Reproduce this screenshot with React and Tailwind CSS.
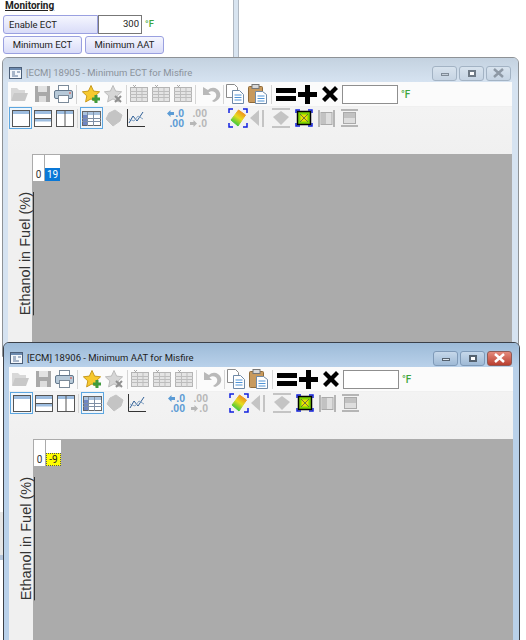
import React from "react";

const ui = { fontFamily: 'Roboto,"Noto Sans",sans-serif' };
const Ic = ({ w = 20, h = 20, ml = 0, children }) => (
  <svg width={w} height={h} viewBox={`0 0 ${w} ${h}`} className="shrink-0 block" style={{ marginLeft: ml }}>{children}</svg>
);
const Sep = ({ ml = 3, mr = 3 }) => <div className="w-px h-[19px] bg-[#d5d5d5] shrink-0" style={{ marginLeft: ml, marginRight: mr }} />;

const Star = ({ fill, stroke }) => <path d="M10 1.5l2.6 5.6 6 .7-4.4 4.1 1.2 6-5.4-3-5.4 3 1.2-6L1.4 7.8l6-.7z" fill={fill} stroke={stroke} strokeWidth="1" />;
const GridIc = ({ ml }) => (
  <Ic w={18} h={18} ml={ml}>
    <rect x="0.5" y="2.5" width="17" height="14" fill="#e4e4e4" stroke="#b5b5b5" />
    <path d="M0 6.5h18M0 9.5h18M0 12.5h18M6.5 3v14M12 3v14" stroke="#bdbdbd" />
    <path d="M3 0l3 3M6 0l-3 3" stroke="#aaa" />
  </Ic>
);
const Sel = ({ w, ml = 0, children }) => (
  <div className="h-[22px] border border-[#5ca6e0] bg-[#f0f6fb] flex items-center justify-center shrink-0" style={{ width: w, marginLeft: ml }}>{children}</div>
);
const Layout = ({ kind }) => (
  <Ic w={18} h={17}>
    <rect x="0.5" y="0.5" width="17" height="16" fill="#fff" stroke="#555" />
    <rect x="1" y="1" width="16" height="3" fill="#9dbde0" />
    {kind === 1 && <path d="M0 8.5h18" stroke="#555" />}
    {kind === 1 && <rect x="1" y="9" width="16" height="2.5" fill="#9dbde0" />}
    {kind === 2 && <path d="M9 1v16" stroke="#555" />}
  </Ic>
);
const Diamond = ({ ml, color = "#c4c4c4" }) => (
  <Ic w={18} h={18} ml={ml}><path d="M10 1l7 5-2 6-7 5-7-7 3-6z" fill={color} stroke={color} strokeLinejoin="round" /></Ic>
);
const Arrow = ({ dir, c }) => (
  <svg width="7" height="7" viewBox="0 0 7 7" className="shrink-0">
    <path d={dir === "l" ? "M0 3.500L3.500 0v2H7v3H3.500v2z" : "M7 3.500L3.500 0v2H0v3h3.500v2z"} fill={c} />
  </svg>
);
const DecTxt = ({ rows, ml, c }) => (
  <div className="w-[19px] shrink-0 text-[10.5px] leading-[10px] font-bold" style={{ marginLeft: ml, color: c, fontFamily: '"Liberation Sans",sans-serif' }}>
    {rows.map((r, i) => (
      <div key={i} className="flex items-center justify-end gap-px h-[10px]">
        {r.arrow && <Arrow dir={r.arrow} c={c} />}
        <span>{r.t}</span>
      </div>
    ))}
  </div>
);

function Toolbars({ gid }) {
  return (
    <div>
      <div className="h-[24px] flex items-center pl-[2px] bg-[#fbfbfb]">
        <Ic w={18} h={18}><path d="M1 3h6l2 2h6v3H5l-3 7H1z" fill="#d8d8d8" /><path d="M4 8h14l-3 8H1z" fill="#c8c8c8" /></Ic>
        <Ic w={17} h={18} ml={6}><path d="M1 1h15v16H1z" fill="#a9a9a9" /><rect x="4" y="1" width="9" height="6" fill="#e2e2e2" /><rect x="5" y="11" width="7" height="6" fill="#ddd" /></Ic>
        <Ic w={19} h={18} ml={3}>
          <rect x="4.5" y="0.5" width="10" height="6" fill="#fff" stroke="#7b8a99" />
          <rect x="0.5" y="5.5" width="18" height="8" rx="1.5" fill="#b7c9d8" stroke="#64788c" />
          <rect x="4.5" y="10.5" width="10" height="7" fill="#fff" stroke="#7b8a99" />
          <path d="M15 8h2" stroke="#e04a3a" />
        </Ic>
        <Sep mr={4} />
        <Ic w={20} h={20}><Star fill="#f7c92e" stroke="#c99a1c" /><path d="M15 11v8M11 15h8" stroke="#3f9a3c" strokeWidth="3" /></Ic>
        <Ic w={20} h={20} ml={2}><Star fill="#d6d6d6" stroke="#bcbcbc" /><path d="M12 12l6 6M18 12l-6 6" stroke="#8f8f8f" strokeWidth="2" /></Ic>
        <Sep ml={3} mr={3} />
        <GridIc />
        <GridIc ml={4} />
        <GridIc ml={4} />
        <Sep ml={3} mr={3} />
        <Ic w={20} h={18} ml={2}><path d="M2 2v8h8L7.500 7.500C10 5.500 14 6 15 9c1 3-1 5-4 7l2 1c5-2 7-5 6-9-1.500-5-8-7-12-3z" fill="#b9b9b9" /></Ic>
        <Sep ml={2} mr={1} />
        <Ic w={20} h={20}>
          <path d="M1.500 0.500h8l3 3v10h-11z" fill="#fff" stroke="#8a8a8a" />
          <path d="M7.500 6.500h7l4 4v9h-11z" fill="#fff" stroke="#6f8aa8" />
          <path d="M9.500 11h7M9.500 13.500h7M9.500 16h7" stroke="#4f93d6" />
        </Ic>
        <Ic w={19} h={20} ml={3}>
          <rect x="0.500" y="2.500" width="14" height="16" rx="1" fill="#c89a5e" stroke="#8f6a38" />
          <rect x="4" y="0.500" width="7" height="4" fill="#d8d8d8" stroke="#777" />
          <path d="M7.500 7.500h7l4 3v9h-11z" fill="#fff" stroke="#6f8aa8" />
          <path d="M9.500 12h7M9.500 14.500h7M9.500 17h7" stroke="#4f93d6" />
        </Ic>
        <Sep ml={4} mr={4} />
        <Ic w={20} h={18}><rect x="0" y="3" width="20" height="5" fill="#000" /><rect x="0" y="11" width="20" height="5" fill="#000" /></Ic>
        <Ic w={19} h={19} ml={2}><path d="M7 0h5v7h7v5h-7v7H7v-7H0V7h7z" fill="#000" /></Ic>
        <Ic w={16} h={16} ml={5}><path d="M0 3l3-3 5 5 5-5 3 3-5 5 5 5-3 3-5-5-5 5-3-3 5-5z" fill="#000" /></Ic>
        <div className="ml-[4px] w-[56px] h-[19px] bg-white border border-[#8f8f8f] shrink-0" />
        <span className="ml-[3px] text-[10px] leading-none text-[#3da63d] font-medium mt-[2px]">°F</span>
      </div>
      <div className="h-[48px] pl-px bg-gradient-to-b from-[#f3f3f3] to-[#f0f0f0] border-t border-[#f0f0f0]">
        <div className="flex items-center h-[22px]">
          <Sel w={23}><Layout kind={0} /></Sel>
          <div className="ml-[2px]"><Layout kind={1} /></div>
          <div className="ml-[4px]"><Layout kind={2} /></div>
          <Sep ml={3} mr={2} />
          <Sel w={23}>
            <Ic w={19} h={15}>
              <rect x="0.500" y="0.500" width="18" height="14" fill="#fff" stroke="#666" />
              <rect x="1" y="1" width="17" height="3" fill="#a9c2de" />
              <rect x="1" y="4" width="4" height="10" fill="#6f86c4" />
              <path d="M0 7.500h19M0 10.500h19M5.500 1v14M11.500 1v14" stroke="#7f8fa5" />
            </Ic>
          </Sel>
          <Diamond ml={2} />
          <Ic w={18} h={18} ml={4}>
            <path d="M0.500 0v17.500H18" fill="none" stroke="#333" />
            <path d="M2 14l4-7 4 5 6-9" fill="none" stroke="#2f5f96" strokeWidth="1" />
            <path d="M2 10l5 2 4-5 5 3" fill="none" stroke="#88a6c6" strokeWidth="1" />
          </Ic>
          <DecTxt ml={20} rows={[{ arrow: "l", t: ".0" }, { t: ".00" }]} c="#5b9bd5" />
          <DecTxt ml={4} rows={[{ t: ".00" }, { arrow: "r", t: ".0" }]} c="#b7b7b7" />
          <Ic w={20} h={20} ml={21}>
            <defs>
              <linearGradient id={gid} x1="0.800" y1="0.100" x2="0.300" y2="0.900">
                <stop offset="0" stopColor="#f08a1e" />
                <stop offset="0.500" stopColor="#e6dc1e" />
                <stop offset="1" stopColor="#3cc83c" />
              </linearGradient>
            </defs>
            <path d="M10.500 2L17.500 7 10 18 3 12z" fill={`url(#${gid})`} stroke={`url(#${gid})`} strokeLinejoin="round" />
            <path d="M1 5V1h4M15 1h4v4M19 15v4h-4M5 19H1v-4" fill="none" stroke="#1020e0" strokeWidth="1.500" />
          </Ic>
          <Ic w={15} h={18} ml={2}><path d="M0 9l9-8v16z" fill="#c4c4c4" /><rect x="12" y="1" width="2" height="17" fill="#c4c4c4" /></Ic>
          <Ic w={18} h={20} ml={7}><rect x="0" y="0" width="18" height="2" fill="#c4c4c4" /><rect x="0" y="18" width="18" height="2" fill="#c4c4c4" /><path d="M9 3l8 6-8 8-8-8z" fill="#c4c4c4" /></Ic>
          <Ic w={18} h={18} ml={5}>
            <path d="M1 4V1h4M13 1h4v3M17 14v3h-4M5 17H1v-3" fill="none" stroke="#1020e0" strokeWidth="1.500" />
            <rect x="2.500" y="2.500" width="13" height="13" fill="#7fd400" stroke="#000" strokeWidth="1.500" />
            <rect x="5.500" y="5.500" width="7" height="7" fill="#e8e000" />
            <path d="M5 5l8 8M13 5l-8 8" stroke="#555" strokeWidth="0.800" />
          </Ic>
          <Ic w={17} h={17} ml={5}><rect x="0" y="0" width="2" height="17" fill="#b5b5b5" /><rect x="15" y="0" width="2" height="17" fill="#b5b5b5" /><rect x="3" y="2.500" width="11" height="12" fill="#dedede" stroke="#aaa" /><rect x="3" y="3" width="5" height="11" fill="#c2c2c2" /></Ic>
          <Ic w={17} h={18} ml={6}><rect x="0" y="0" width="17" height="2" fill="#b5b5b5" /><rect x="0" y="16" width="17" height="2" fill="#b5b5b5" /><rect x="2.500" y="3.500" width="12" height="11" fill="#dedede" stroke="#aaa" /><rect x="3" y="4" width="11" height="5" fill="#c2c2c2" /></Ic>
        </div>
      </div>
    </div>
  );
}

const Cap = ({ children, active, close }) => (
  <div
    className={`w-[25px] h-[15px] rounded-[3px] border flex items-center justify-center ${
      close && active
        ? "bg-gradient-to-b from-[#e48a7c] to-[#b93e30] border-[#8e5a55]"
        : active
        ? "bg-gradient-to-b from-[#c6d8ea] to-[#9fbad6] border-[#7f9ab8]"
        : "bg-gradient-to-b from-[#d8e3ee] to-[#c6d4e3] border-[#a3b3c4]"
    }`}
  >
    {children}
  </div>
);

function Win({ title, active, cell, cellCls, className, gid }) {
  return (
    <div
      className={`absolute flex flex-col overflow-hidden rounded-t-[6px] border ${active ? "border-[#3b4048] bg-[#b9d1ea]" : "border-[#8e9296] bg-[#d6e3f1]"} ${className}`}
    >
      <div className={`h-[24px] shrink-0 flex items-center pl-[6px] pt-[6px] ${active ? "bg-gradient-to-b from-[#9dbbd8] to-[#b9d1ea]" : "bg-gradient-to-b from-[#c4d2e0] to-[#d6e3f1]"}`}>
        <Ic w={14} h={14}>
          <rect x="0.500" y="1.500" width="12" height="11" fill="#f4f7fb" stroke="#4c5f78" />
          <rect x="1" y="2" width="11" height="2" fill="#6d8bb0" />
          <path d="M3 6h3M3 8h3M3 10h6M8 6h3" stroke="#5b7597" />
        </Ic>
        <span className={`ml-[3px] text-[9.5px] leading-[14px] whitespace-nowrap ${active ? "text-[#222]" : "text-[#8b939c]"}`} style={ui}>{title}</span>
        <div className="ml-auto mr-[7px] flex gap-[2px]">
          <Cap active={active}><div className={`w-[8px] h-[3px] border ${active ? "border-[#55626f] bg-[#dde6ef]" : "border-[#7f8b97] bg-[#c5cfda]"} mt-[2px]`} /></Cap>
          <Cap active={active}><div className={`w-[8px] h-[7px] border-2 ${active ? "border-[#55626f] bg-white" : "border-[#6f7a86] bg-white"}`} /></Cap>
          <Cap active={active} close>
            <svg width="11" height="10" viewBox="0 0 11 10"><path d="M1 1l9 8M10 1l-9 8" stroke={active ? "#fff" : "#8e99a5"} strokeWidth="2.500" /></svg>
          </Cap>
        </div>
      </div>
      <div className="flex-1 ml-[5px] mr-[6px] flex flex-col min-h-0">
        <Toolbars gid={gid} />
        <div className="flex-1 flex min-h-0">
          <div className="w-[24px] shrink-0 bg-[#f0f0f0] relative">
            <span
              className="absolute left-[9px] top-[38px] [writing-mode:vertical-rl] rotate-180 text-[14.5px] leading-[17px] underline whitespace-nowrap text-[#333]"
              style={{ fontFamily: '"Liberation Sans",sans-serif' }}
            >
              Ethanol in Fuel (%)
            </span>
          </div>
          <div className="flex-1 bg-[#ababab] pl-px pt-px">
            <div className="grid grid-cols-[11px_15px] grid-rows-[13px_13px] gap-x-px w-[27px] text-[10px] leading-[13px] text-center" style={ui}>
              <div className="bg-white" />
              <div className="bg-white" />
              <div className="bg-white text-[#333]">0</div>
              <div className={cellCls}>{cell}</div>
            </div>
          </div>
        </div>
      </div>
    </div>
  );
}

export default function App() {
  return (
    <div className="relative w-[526px] h-[640px] overflow-hidden bg-white" style={ui}>
      <div className="absolute left-[233px] top-0 w-[6px] h-[60px] bg-[#d8e4f0] border-x border-[#b0b8c2]" />
      <div className="absolute left-0 top-[512px] w-[3px] h-[48px] bg-[#e6e6e6] border-b-[5px] border-[#b6c6dc]" />
      <div className="pl-[5px] text-[10px] leading-[12px] font-bold underline text-[#222]">Monitoring</div>
      <div className="pl-[3px] mt-[3px] flex items-center h-[19px]">
        <div className="w-[95px] h-[19px] rounded-l-[3px] border border-[#9aa0e0] bg-gradient-to-b from-[#f5f6fe] to-[#d9dcf8] pl-[5px] text-[9.5px] leading-[17px] text-[#222]">Enable ECT</div>
        <div className="w-[44px] h-[19px] border border-[#777] bg-white text-right pr-[2px] text-[9.5px] leading-[15px] text-[#222]">300</div>
        <span className="ml-[3px] text-[9.5px] text-[#3da63d] font-medium">°F</span>
      </div>
      <div className="pl-[3px] mt-[2px] flex gap-[3px]">
        {["Minimum ECT", "Minimum AAT"].map((t) => (
          <div key={t} className="w-[79px] h-[18px] rounded-[3px] border border-[#9aa0e0] bg-gradient-to-b from-[#f5f6fe] to-[#d9dcf8] text-center text-[9.5px] leading-[16px] text-[#222]">{t}</div>
        ))}
      </div>
      <Win
        gid="hm1"
        className="left-[2px] top-[57px] w-[517px] h-[300px]"
        title="[ECM] 18905 - Minimum ECT for Misfire"
        cell="19"
        cellCls="bg-[#0a78d7] text-white"
      />
      <Win
        gid="hm2"
        active
        className="left-[3px] top-[342px] w-[517px] h-[310px]"
        title="[ECM] 18906 - Minimum AAT for Misfire"
        cell="-9"
        cellCls="bg-[#ffff00] text-[#222] outline-dotted outline-1 -outline-offset-1 outline-[#555]"
      />
    </div>
  );
}
